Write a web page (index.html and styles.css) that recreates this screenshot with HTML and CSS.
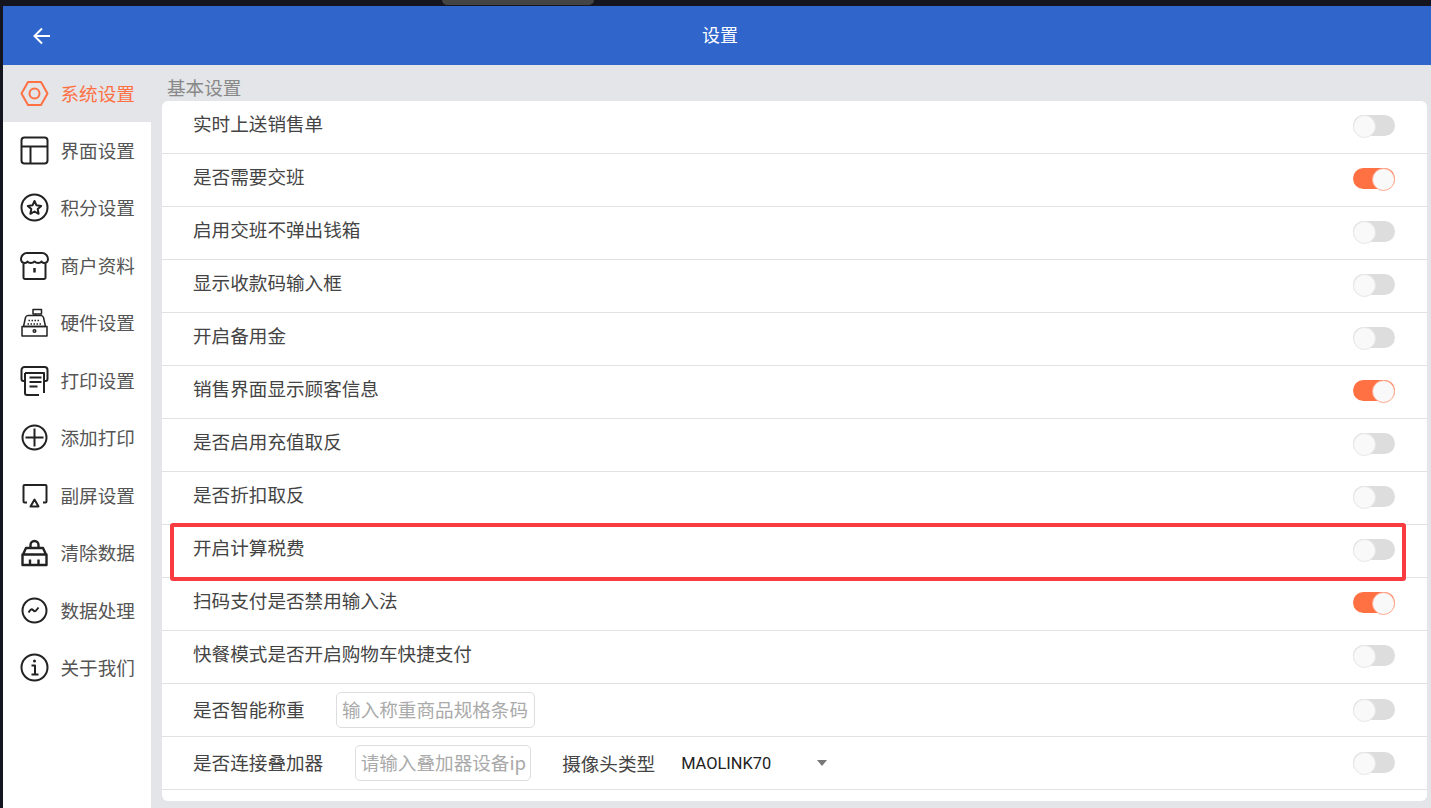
FILE: index.html
```html
<!DOCTYPE html>
<html lang="zh-CN">
<head>
<meta charset="utf-8">
<title>设置</title>
<link rel="stylesheet" href="styles.css">
</head>
<body>
<div class="topbar"><div class="notch"></div></div>
<div class="app">
  <header class="header">
    <svg class="back" viewBox="0 0 20 20"><path d="M18 10H3M10 2.500 2.500 10l7.500 7.500"/></svg>
    <div class="title">设置</div>
  </header>
  <div class="body">
    <nav class="side">
      <div class="nav first">
        <svg class="ico" viewBox="0 0 30 30"><path d="M8 3h13l6.500 11.500L21 26H8L1.500 14.500z"/><circle cx="14.500" cy="14.500" r="5"/></svg>
        <span>系统设置</span>
      </div>
      <div class="navlist">
        <div class="nav">
          <svg class="ico" viewBox="0 0 30 30"><rect x="1.500" y="1.500" width="26" height="26" rx="3"/><path d="M1.500 10.500h26M10.500 10.500v17"/></svg>
          <span>界面设置</span>
        </div>
        <div class="nav">
          <svg class="ico" viewBox="0 0 30 30"><circle cx="14.500" cy="14.500" r="13"/><path d="m14.500 8 2 4.300 4.700.6-3.500 3.200.9 4.700-4.100-2.300-4.100 2.300.9-4.700-3.500-3.200 4.700-.6z"/></svg>
          <span>积分设置</span>
        </div>
        <div class="nav">
          <svg class="ico" viewBox="0 0 30 30"><path d="M7 2h15c3 0 6 2.500 6 6 0 1.500-.5 2.500-1 3-1.500 1.500-4.500 1.500-5.500-.5-1.500 2-5 2-7 0-2 2-5.500 2-7 0C6.500 12.500 3.500 12.500 2 11c-.5-.5-1-1.500-1-3 0-3.500 3-6 6-6z"/><path d="M3.500 12.500V26.500a1.500 1.500 0 0 0 1.500 1.500h19a1.500 1.500 0 0 0 1.500-1.500V12.500"/><path class="bold" d="M14.500 17v4.500"/></svg>
          <span>商户资料</span>
        </div>
        <div class="nav">
          <svg class="ico thin" viewBox="0 0 30 30"><path d="M13 1.500h8.500V6H13zM15.500 6v1.500"/><path d="M9 7.500h12c1 0 2 .5 2.500 2l2 9h-22l2-9c.5-1.500 1.500-2 2.500-2z"/><path d="M2 18.500h25V28H2z"/><path class="dots" d="M8.500 12.500h12M7.500 16h14"/><circle cx="14.500" cy="23" r="1.300"/></svg>
          <span>硬件设置</span>
        </div>
        <div class="nav">
          <svg class="ico" viewBox="0 0 30 30"><path d="M5 15H3.500a2 2 0 0 1-2-2V4a3 3 0 0 1 3-3h20a3 3 0 0 1 3 3v9a2 2 0 0 1-2 2H24"/><path d="M5 7h19v20M5 7v20a2 2 0 0 0 2 2h12M9.500 11.500h12M9.500 16h12M9.500 20.500h8"/></svg>
          <span>打印设置</span>
        </div>
        <div class="nav">
          <svg class="ico" viewBox="0 0 30 30"><circle cx="14.500" cy="14.500" r="12"/><path d="M5.500 14.500h18M14.500 5.500v18"/></svg>
          <span>添加打印</span>
        </div>
        <div class="nav">
          <svg class="ico" viewBox="0 0 30 30"><path d="M7 21.500H4.500a1 1 0 0 1-1-1V5a1 1 0 0 1 1-1h21a1 1 0 0 1 1 1v15.500a1 1 0 0 1-1 1H23"/><path d="m14.500 18.500 4 7h-8z"/></svg>
          <span>副屏设置</span>
        </div>
        <div class="nav">
          <svg class="ico heavy" viewBox="0 0 30 30"><path d="M10.500 10V7a4 4 0 0 1 8 0v3"/><path d="M6 10h17l3 6.500H3zM2.500 16.500h24V27h-24zM10 21.500V27M18.500 21.500V27"/></svg>
          <span>清除数据</span>
        </div>
        <div class="nav">
          <svg class="ico" viewBox="0 0 30 30"><circle cx="14.500" cy="14.500" r="12"/><path d="M8.500 16.500c2-3 3-4 4.500-2.500s2 2 3.500 0l2-2.500"/></svg>
          <span>数据处理</span>
        </div>
        <div class="nav">
          <svg class="ico" viewBox="0 0 30 30"><circle cx="14.500" cy="14.500" r="13"/><path d="M11.500 12.500h3.500V21M11.500 21.500h7"/><circle class="solid" cx="14.500" cy="8" r="1.500"/></svg>
          <span>关于我们</span>
        </div>
      </div>
    </nav>
    <main class="main">
      <div class="heading">基本设置</div>
      <section class="card">
        <div class="row"><span class="label">实时上送销售单</span><i class="toggle"></i></div>
        <div class="row"><span class="label">是否需要交班</span><i class="toggle on"></i></div>
        <div class="row"><span class="label">启用交班不弹出钱箱</span><i class="toggle"></i></div>
        <div class="row"><span class="label">显示收款码输入框</span><i class="toggle"></i></div>
        <div class="row"><span class="label">开启备用金</span><i class="toggle"></i></div>
        <div class="row"><span class="label">销售界面显示顾客信息</span><i class="toggle on"></i></div>
        <div class="row"><span class="label">是否启用充值取反</span><i class="toggle"></i></div>
        <div class="row"><span class="label">是否折扣取反</span><i class="toggle"></i></div>
        <div class="row"><span class="label">开启计算税费</span><i class="toggle"></i></div>
        <div class="row"><span class="label">扫码支付是否禁用输入法</span><i class="toggle on"></i></div>
        <div class="row"><span class="label">快餐模式是否开启购物车快捷支付</span><i class="toggle"></i></div>
        <div class="row form"><span class="label">是否智能称重</span><input class="field w1" placeholder="输入称重商品规格条码"><i class="toggle"></i></div>
        <div class="row form"><span class="label">是否连接叠加器</span><input class="field w2" placeholder="请输入叠加器设备ip"><span class="label cam">摄像头类型</span><div class="select"><span>MAOLINK70</span><b class="caret"></b></div><i class="toggle"></i></div>
        <div class="highlight"></div>
      </section>
    </main>
  </div>
</div>
</body>
</html>
```

FILE: styles.css
```css
* { box-sizing: border-box; }
html, body { margin: 0; height: 100%; }
body {
  width: 1431px;
  height: 808px;
  overflow: hidden;
  background: #15151f;
  font-family: "Noto Sans CJK SC", "Noto Sans", sans-serif;
  font-size: 18.600px;
  display: flex;
  flex-direction: column;
}
.topbar { height: 6px; flex: none; }
.notch {
  width: 152px;
  height: 5px;
  margin-left: 442px;
  background: #444;
  border-radius: 0 0 5px 5px;
}
.app {
  flex: 1;
  margin-left: 3px;
  display: flex;
  flex-direction: column;
  min-height: 0;
}
.header {
  height: 59px;
  flex: none;
  background: #3066cc;
  color: #fff;
  display: flex;
  align-items: center;
  padding-left: 29px;
}
.back { width: 20px; height: 20px; flex: none; fill: none; stroke: #fff; stroke-width: 2; }
.title { margin-left: 650px; padding-bottom: 3px; font-size: 18px; line-height: 24px; }
.body { flex: 1; display: flex; background: #e3e5e9; min-height: 0; }
.side { width: 148px; flex: none; display: flex; flex-direction: column; }
.navlist { flex: 1; background: #fff; }
.nav {
  height: 57.500px;
  display: flex;
  align-items: center;
  padding-left: 17px;
  color: #555;
  line-height: 24px;
}
.nav span { margin-left: 10.500px; padding-bottom: 2px; }
.nav.first { height: 57px; color: #ff7043; }
.ico { width: 30px; height: 30px; flex: none; fill: none; stroke: #222; stroke-width: 2; stroke-linejoin: round; }
.first .ico { stroke: #ff7043; }
.ico.thin { stroke-width: 1.500; }
.ico.heavy { stroke-width: 2.400; }
.ico .dots { stroke-dasharray: 1.500 1.500; }
.ico .bold { stroke-width: 2.500; }
.ico .solid { fill: #222; stroke: none; }
.main { flex: 1; min-width: 0; padding: 10px 4px 0 11px; }
.heading { height: 26px; line-height: 24px; padding-left: 5px; color: #888; }
.card {
  position: relative;
  background: #fff;
  border-radius: 6px;
  padding-bottom: 11px;
}
.row {
  height: 53px;
  display: flex;
  align-items: center;
  padding: 0 32px 3px 31px;
  border-bottom: 1px solid #e2e2e2;
  color: #444;
}
.row > .label { padding-bottom: 6px; }
.row.form { padding-bottom: 0; }
.row.form > .label { padding-bottom: 3px; }
.toggle {
  width: 42px;
  height: 21px;
  margin-left: auto;
  flex: none;
  border-radius: 11px;
  background: #ddd;
  display: flex;
}
.toggle::before {
  content: "";
  width: 21px;
  height: 21px;
  border-radius: 50%;
  background: #f9f9f9;
  border: 1px solid #e6e6e6;
}
.toggle.on { background: #ff7043; justify-content: flex-end; }
.toggle.on::before { border-color: #ffa78d; }
.form .toggle { margin-bottom: 1px; }
.field {
  height: 36px;
  margin-left: 31.500px;
  padding: 0 3px 3px 5px;
  border: 1px solid #ddd;
  border-radius: 5px;
  font: inherit;
  background: #fff;
}
.field::placeholder { color: #aaa; opacity: 1; }
.w1 { width: 199px; }
.w2 { width: 176px; }
.row.form > .cam { margin-left: 31.500px; padding-bottom: 1px; }
.select {
  display: flex;
  align-items: center;
  margin-left: 26px;
  width: 146px;
  justify-content: space-between;
  font-family: "Roboto", "Liberation Sans", sans-serif;
  font-size: 16.400px;
  color: #222;
}
.caret {
  width: 0;
  height: 0;
  border-left: 5px solid transparent;
  border-right: 5px solid transparent;
  border-top: 6px solid #777;
}
.highlight {
  position: absolute;
  left: 8px;
  top: 422px;
  width: 1236px;
  height: 58px;
  border: 4px solid #f83c3f;
  border-radius: 3px;
  pointer-events: none;
}
```
